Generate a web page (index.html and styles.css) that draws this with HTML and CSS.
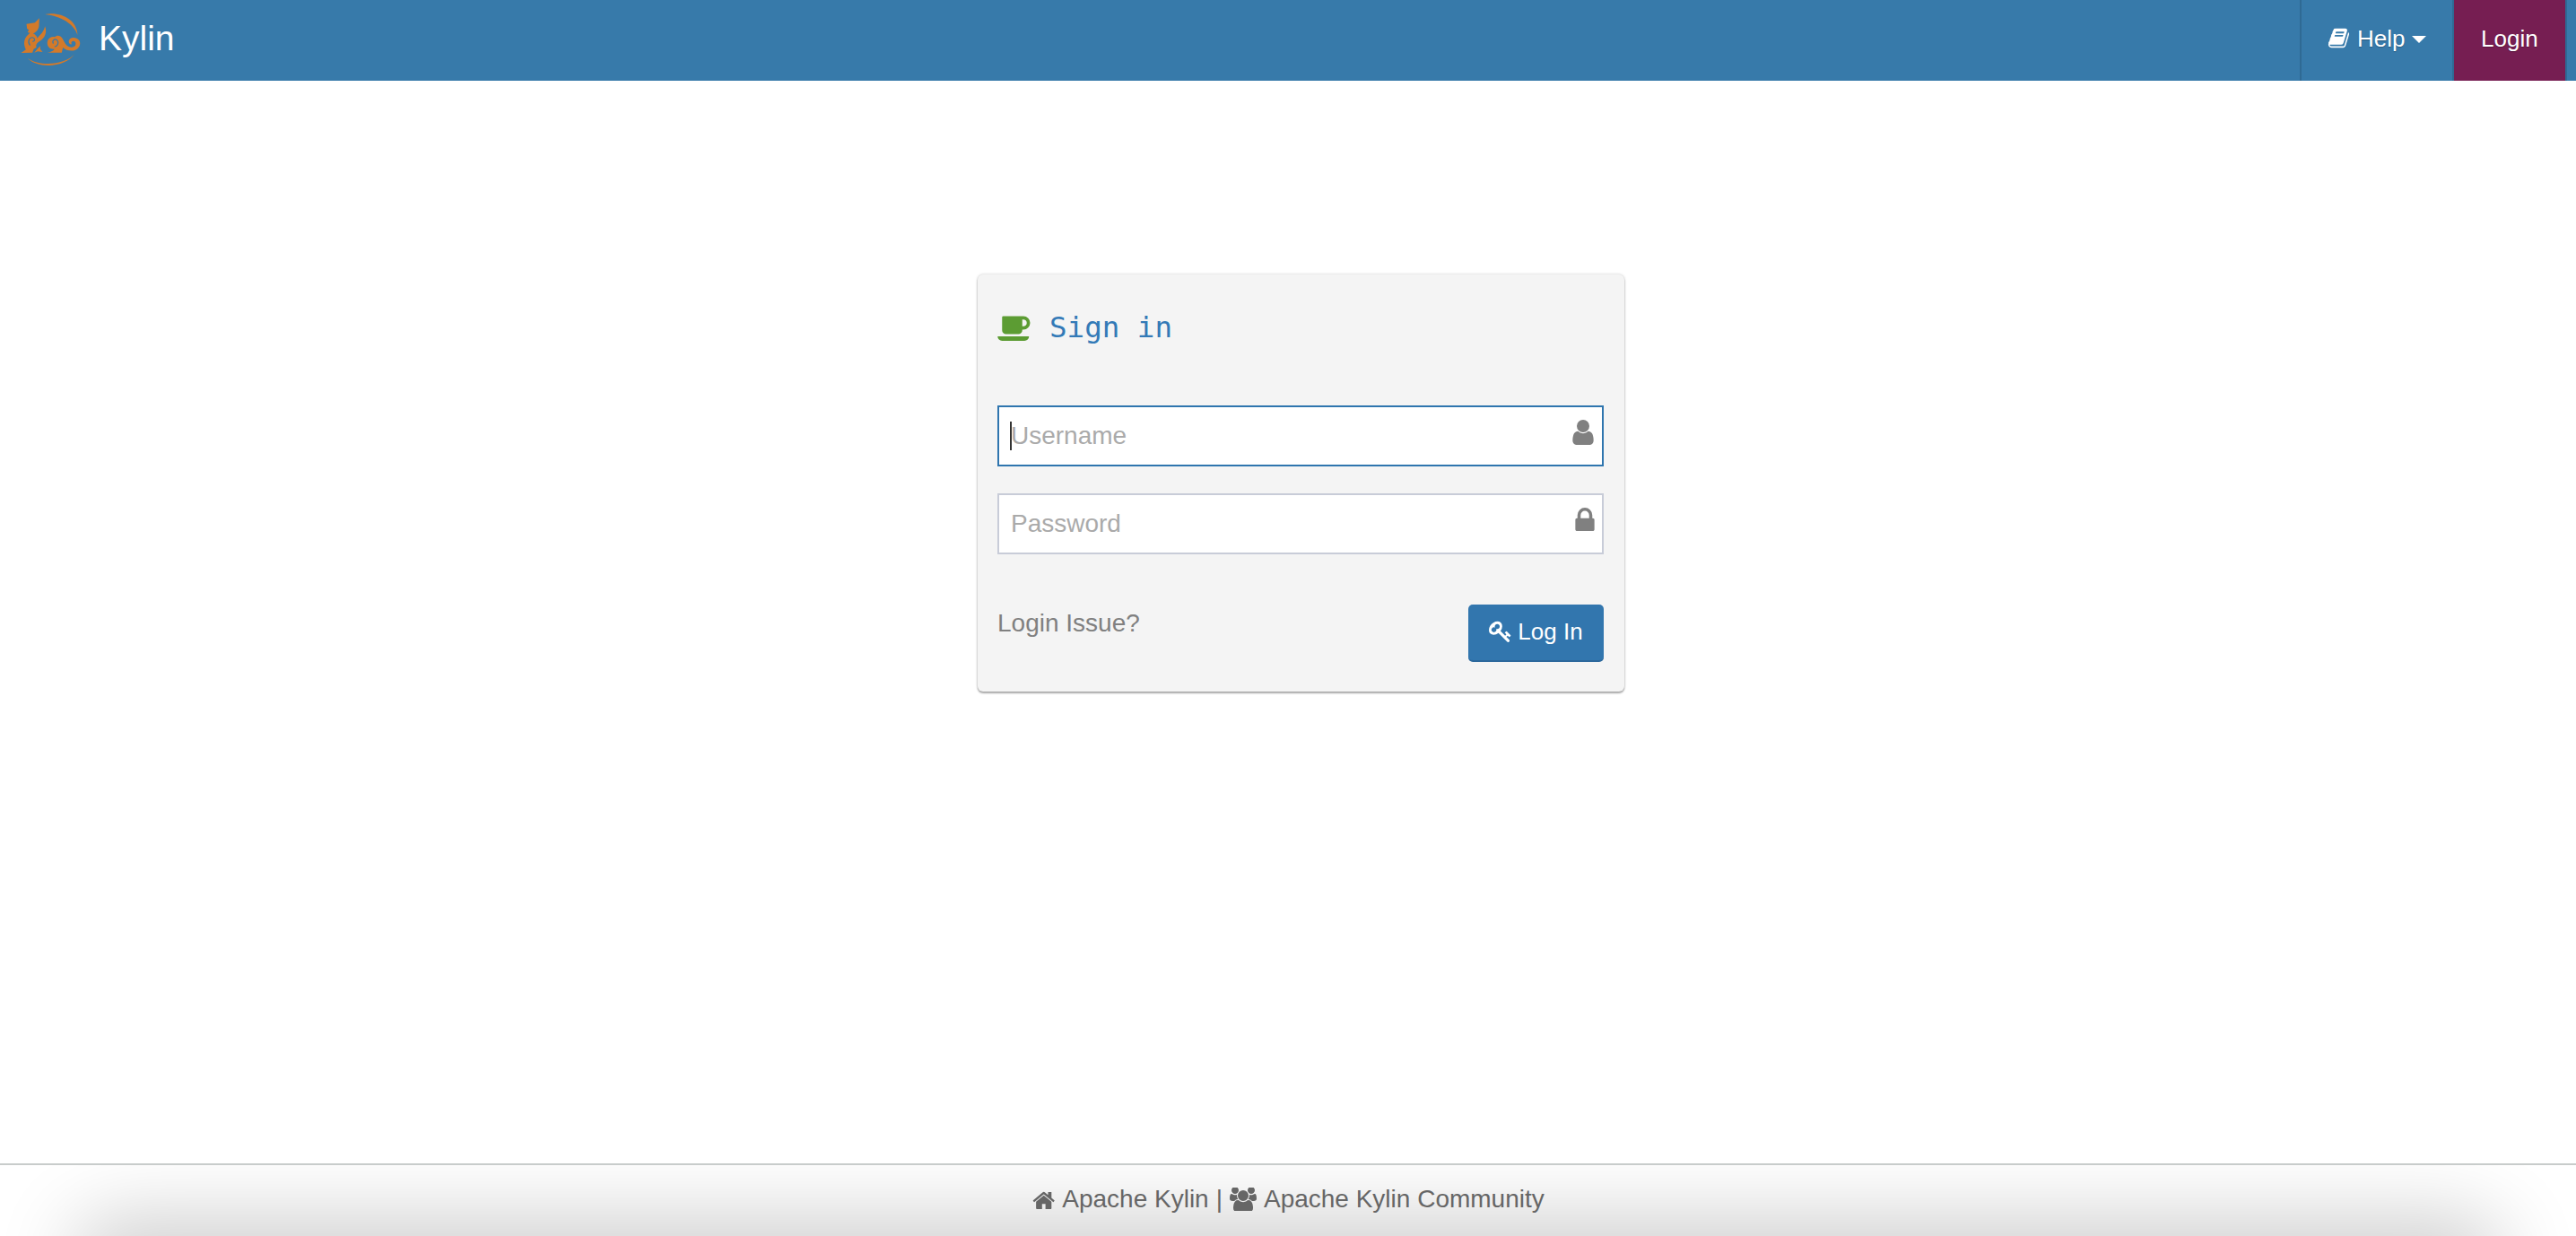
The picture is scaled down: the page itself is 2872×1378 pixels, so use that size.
FILE: index.html
```html
<!DOCTYPE html>
<html lang="en">
<head>
<meta charset="utf-8">
<title>Kylin</title>
<link rel="stylesheet" href="styles.css">
</head>
<body>
<header class="topbar">
  <a class="brand">
    <svg class="logo" viewBox="66 38 206 186" aria-hidden="true">
      <path d="M150 44C200 34 257 60 259 113C246 76 205 50 150 44Z"/>
      <path d="M91 190C122 224 214 226 249 177C222 211 135 222 91 190Z"/>
      <path d="M88 76L116 72L131 57L130 80C130 92 122 104 110 108C118 112 124 118 124 124C134 112 146 104 150 84C158 104 150 124 132 134C122 140 118 148 122 154L112 160L108 172L70 173L86 162C80 150 78 136 84 124C90 114 96 110 100 106L92 104L96 96L90 92Z"/>
      <path d="M114 172L126 158L134 150L134 160L142 170L126 168Z"/>
      <path d="M158 172L206 172L210 155C220 165 238 168 250 164C264 158 270 146 266 134C260 122 240 118 232 128C226 136 232 146 240 144C236 140 238 134 244 133C252 132 256 142 250 150C242 158 226 154 218 142L208 124C202 114 190 112 182 120C168 116 156 128 158 144C160 156 170 162 182 160C178 166 168 170 158 172Z"/>
      <path class="logo-cut" d="M100 148C90 135 98 118 110 122C118 125 116 136 108 134"/>
      <path class="logo-cut" d="M178 142C172 132 182 124 190 130C198 138 192 152 182 152"/>
    </svg>
    <span class="brand-name">Kylin</span>
  </a>
  <nav class="nav">
    <a class="nav-item nav-help">
      <svg class="ico ico-book" viewBox="0 0 1792 1792" aria-hidden="true"><path d="M1703 478q40 57 18 129l-275 906q-19 64-76.500 107.500t-122.500 43.500h-923q-77 0-148.500-53.500t-99.500-131.500q-24-67-2-127 0-4 3-27t4-37q1-8-3-21.500t-3-19.500q2-11 8-21t16.500-23.500 16.500-23.500q23-38 45-91.500t30-91.500q3-10 .5-30t-.5-28q3-11 17-28t17-23q21-36 42-92t25-90q1-9-2.500-32t.5-28q4-13 22-30.500t22-22.500q19-26 42.500-84.500t27.500-96.500q1-8-3-25.500t-2-26.500q2-8 9-18t18-23 17-21q8-12 16.500-30.500t15-35 16-36 19.500-32 26.500-23.500 36-11.500 47.500 5.500l-1 3q38-9 51-9h761q74 0 114 56t18 130l-274 906q-36 119-71.500 153.500t-128.500 34.500h-869q-27 0-38 15-11 16-1 43 24 70 144 70h923q29 0 56-15.500t35-41.500l300-987q7-22 5-57 38 15 59 43zm-1064 2q-4 13 2 22.500t20 9.500h608q13 0 25.500-9.500t16.500-22.500l21-64q4-13-2-22.500t-20-9.500h-608q-13 0-25.500 9.500t-16.500 22.500zm-83 256q-4 13 2 22.500t20 9.500h608q13 0 25.500-9.500t16.500-22.500l21-64q4-13-2-22.500t-20-9.500h-608q-13 0-25.500 9.500t-16.500 22.500z"/></svg>
      <span>Help</span>
      <i class="caret"></i>
    </a>
    <a class="nav-item nav-login">Login</a>
  </nav>
</header>

<main class="main">
  <section class="card">
    <h4 class="card-title">
      <svg class="ico ico-coffee" viewBox="0 128 1920 1536" aria-hidden="true"><path d="M1664 640q0-80-56-136t-136-56h-64v384h64q80 0 136-56t56-136zm-1664 768h1792q0 106-75 181t-181 75h-1280q-106 0-181-75t-75-181zm1856-768q0 159-112.500 271.500t-271.500 112.500h-64v32q0 92-66 158t-158 66h-704q-92 0-158-66t-66-158v-736q0-26 19-45t45-19h1152q159 0 271.500 112.500t112.500 271.500z"/></svg>
      <span>Sign in</span>
    </h4>
    <form class="login-form">
      <label class="field field-focus">
        <input class="field-input" type="text" placeholder="Username">
        <i class="text-caret"></i>
        <svg class="ico field-icon ico-user" viewBox="256 128 1280 1536" aria-hidden="true"><path d="M1536 1399q0 109-62.500 187t-150.500 78h-854q-88 0-150.500-78t-62.500-187q0-85 8.500-160.500t31.500-152 58.500-131 94-89 134.500-34.500q131 128 313 128t313-128q76 0 134.500 34.500t94 89 58.500 131 31.500 152 8.500 160.500zm-256-887q0 159-112.500 271.500t-271.500 112.500-271.500-112.500-112.500-271.500 112.500-271.500 271.500-112.500 271.500 112.500 112.500 271.500z"/></svg>
      </label>
      <label class="field">
        <input class="field-input" type="password" placeholder="Password">
        <svg class="ico field-icon ico-lock" viewBox="320 128 1152 1408" aria-hidden="true"><path d="M640 768h512v-192q0-106-75-181t-181-75-181 75-75 181v192zm832 96v576q0 40-28 68t-68 28h-960q-40 0-68-28t-28-68v-576q0-40 28-68t68-28h32v-192q0-184 132-316t316-132 316 132 132 316v192h32q40 0 68 28t28 68z"/></svg>
      </label>
      <div class="form-actions">
        <a class="issue-link">Login Issue?</a>
        <button class="btn-login" type="button">
          <svg class="ico ico-key" viewBox="0 0 1792 1792" aria-hidden="true"><path d="M832 512q0-80-56-136t-136-56-136 56-56 136q0 42 19 83-41-19-83-19-80 0-136 56t-56 136 56 136 136 56 136-56 56-136q0-42-19-83 41 19 83 19 80 0 136-56t56-136zm851 704q0 17-49 66t-66 49q-9 0-28.500-16t-36.500-33-38.500-40-24.500-26l-96 96 220 220q28 28 28 68 0 42-39 81t-81 39q-40 0-68-28l-671-671q-176 131-365 131-163 0-265.500-102.500t-102.500-265.500q0-160 95-313t248-248 313-95q163 0 265.500 102.500t102.500 265.500q0 189-131 365l355 355 96-96q-3-3-26-24.500t-40-38.500-33-36.500-16-28.500q0-17 49-66t66-49q13 0 23 10 6 6 46 44.500t82 79.500 86.500 86 73 78 28.500 41z"/></svg>
          <span>Log In</span>
        </button>
      </div>
    </form>
  </section>
</main>

<footer class="footer">
  <div class="footer-line">
    <a class="footer-link">
      <svg class="ico ico-home" viewBox="0 128 1696 1408" aria-hidden="true"><path d="M1472 992v480q0 26-19 45t-45 19h-384v-384h-256v384h-384q-26 0-45-19t-19-45v-480q0-1 .5-3t.5-3l575-474 575 474q1 2 1 6zm223-69l-62 74q-8 9-21 11h-3q-13 0-21-7l-692-577-692 577q-12 8-24 7-13-2-21-11l-62-74q-8-10-7-23.500t11-21.500l719-599q32-26 76-26t76 26l244 204v-195q0-14 9-23t23-9h192q14 0 23 9t9 23v408l219 182q10 8 11 21.500t-7 23.500z"/></svg>
      Apache Kylin</a>
    <span>|</span>
    <a class="footer-link">
      <svg class="ico ico-users" viewBox="0 128 1920 1536" aria-hidden="true"><path d="M593 896q-162 5-265 128h-134q-82 0-138-40.500t-56-118.500q0-353 124-353 6 0 43.500 21t97.500 42.500 119 21.500q67 0 133-23-5 37-5 66 0 139 81 256zm1071 637q0 120-73 189.500t-194 69.500h-874q-121 0-194-69.500t-73-189.500q0-53 3.500-103.500t14-109 26.500-108.500 43-97.500 62-81 85.500-53.500 111.500-20q10 0 43 21.500t73 48 107 48 135 21.500 135-21.500 107-48 73-48 43-21.500q61 0 111.500 20t85.500 53.500 62 81 43 97.500 26.500 108.500 14 109 3.500 103.500zm-1024-1277q0 106-75 181t-181 75-181-75-75-181 75-181 181-75 181 75 75 181zm704 384q0 159-112.500 271.500t-271.500 112.500-271.500-112.500-112.500-271.500 112.500-271.500 271.500-112.500 271.500 112.500 112.500 271.500zm576 225q0 78-56 118.500t-138 40.500h-134q-103-123-265-128 81-117 81-256 0-29-5-66 66 23 133 23 59 0 119-21.500t97.500-42.500 43.500-21q124 0 124 353zm-128-609q0 106-75 181t-181 75-181-75-75-181 75-181 181-75 181 75 75 181z"/></svg>
      Apache Kylin Community</a>
  </div>
</footer>
</body>
</html>
```

FILE: styles.css
```css
* { box-sizing: border-box; }
html, body { height: 100%; }
body {
  margin: 0;
  height: 100vh;
  display: flex;
  flex-direction: column;
  overflow: hidden;
  background: #fff;
  font-family: "Liberation Sans", Arial, sans-serif;
  font-size: 28px;
  color: #666;
}
.ico { display: block; fill: currentColor; flex: none; }

.topbar {
  flex: none;
  height: 90px;
  display: flex;
  justify-content: space-between;
  background: #377aaa;
  color: #fff;
}
.brand { display: flex; align-items: center; padding-left: 22px; }
.logo { width: 69px; height: 62px; fill: #d37a2a; flex: none; }
.logo-cut { fill: none; stroke: #377aaa; stroke-width: 3.5; }
.brand-name { margin: 0 0 5px 19px; font-size: 39px; }

.nav { display: flex; padding-right: 10px; }
.nav-item {
  display: flex;
  align-items: center;
  height: 90px;
  padding-bottom: 3px;
  font-size: 26px;
  border-left: 2px solid #2f6a94;
  text-shadow: 0 1px 1px rgba(0, 0, 0, .25);
}
.nav-help { width: 170px; padding-left: 29px; gap: 8px; }
.ico-book { width: 25px; height: 25px; margin-top: -2px; }
.caret {
  width: 0;
  height: 0;
  border-top: 8px solid #fff;
  border-left: 8px solid transparent;
  border-right: 8px solid transparent;
}
.nav-login {
  width: 128px;
  padding-left: 30px;
  background: #761e52;
  border-right: 2px solid #2f6a94;
}

.main { flex: 1; display: flex; justify-content: center; padding: 216px 0 0 29px; }
.card {
  width: 721px;
  height: 465px;
  padding: 0 23px 0 22px;
  background: #f4f4f4;
  border-radius: 6px;
  box-shadow: 0 0 3px rgba(0, 0, 0, .22), 0 2px 2px rgba(0, 0, 0, .3);
}
.card-title {
  display: flex;
  align-items: center;
  gap: 20px;
  height: 146px;
  margin: 0;
  padding-bottom: 28px;
  font-family: "DejaVu Sans Mono", monospace;
  font-size: 32.5px;
  font-weight: 400;
  color: #337ab7;
}
.ico-coffee { width: 38px; height: 30px; color: #5c9c33; }

.login-form { display: flex; flex-direction: column; gap: 30px; }
.field { position: relative; display: block; height: 68px; }
.field-input {
  display: block;
  width: 100%;
  height: 100%;
  padding: 0 60px 0 13px;
  border: 2px solid #c8ccd8;
  background: #fff;
  outline: none;
  font: 28px "Liberation Sans", Arial, sans-serif;
  color: #555;
}
.field-input::placeholder { color: #aaa; opacity: 1; }
.field-focus .field-input { border-color: #2f75ae; }
.text-caret {
  position: absolute;
  left: 14px;
  top: 18px;
  width: 2px;
  height: 32px;
  background: #333;
}
.field-icon { position: absolute; color: #808080; }
.ico-user { right: 10px; top: 16px; width: 26px; height: 28px; }
.ico-lock { right: 10px; top: 16px; width: 22px; height: 26px; }

.form-actions {
  display: flex;
  justify-content: space-between;
  align-items: flex-start;
  margin-top: 26px;
}
.issue-link { margin-top: 5px; font-size: 28px; line-height: 32px; color: #808080; }
.btn-login {
  display: flex;
  align-items: center;
  justify-content: center;
  gap: 6px;
  width: 151px;
  height: 64px;
  padding: 0 0 2px;
  border: 0;
  border-bottom: 2px solid #2c689c;
  border-radius: 5px;
  background: #3276ae;
  color: #fff;
  font: 26px "Liberation Sans", Arial, sans-serif;
}
.ico-key { width: 26px; height: 26px; }

.footer {
  position: relative;
  flex: none;
  height: 81px;
  overflow: hidden;
  border-top: 2px solid #c8cccb;
  background: #fff;
}
.footer::after {
  content: "";
  position: absolute;
  left: 100px;
  right: 100px;
  top: 100%;
  height: 60px;
  border-radius: 40px;
  box-shadow: 0 0 90px 20px rgba(0, 0, 0, .2);
}
.footer-line {
  position: relative;
  z-index: 1;
  display: flex;
  justify-content: center;
  align-items: center;
  gap: 8px;
  height: 68px;
  padding-top: 8px;
  color: #666;
}
.footer-link { display: flex; align-items: center; gap: 8px; }
.ico-home { width: 26px; height: 21px; }
.ico-users { width: 30px; height: 26px; }
```
